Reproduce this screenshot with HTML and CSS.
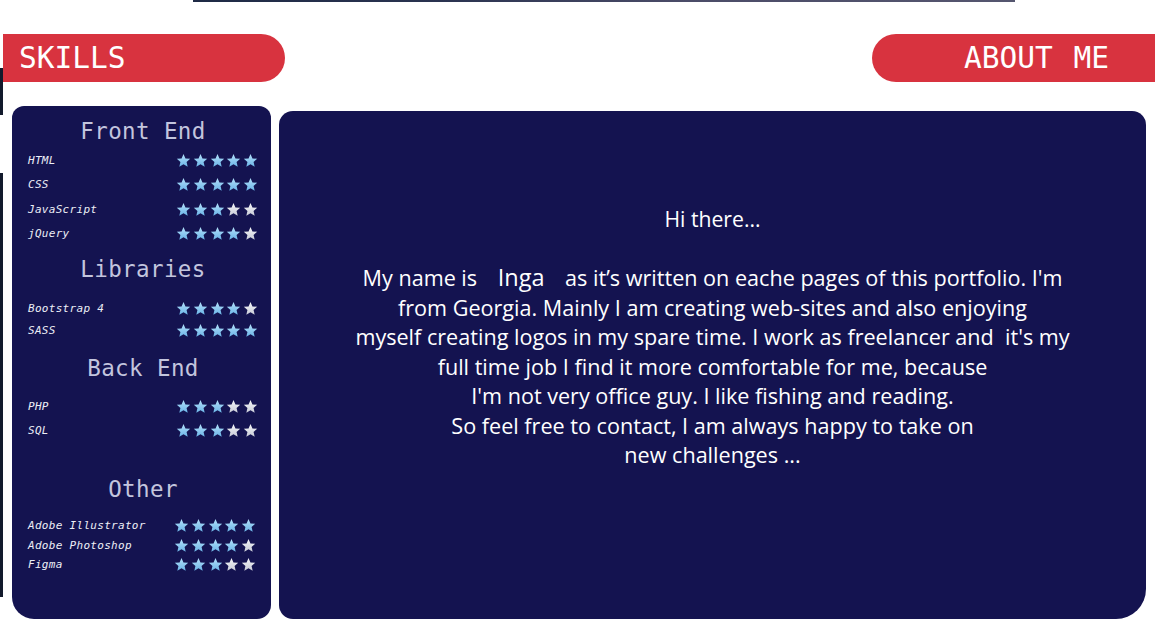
FILE: index.html
```html
<!DOCTYPE html>
<html lang="en">
<head>
<meta charset="utf-8">
<title>Skills / About me</title>
<link rel="stylesheet" href="styles.css">
</head>
<body>
<svg class="defs" width="0" height="0" aria-hidden="true">
  <defs>
    <linearGradient id="gOn" x1="0" y1="0" x2="0" y2="1">
      <stop offset="0" stop-color="#b3e0fa"/>
      <stop offset="1" stop-color="#6cb5e8"/>
    </linearGradient>
    <linearGradient id="gOff" x1="0" y1="0" x2="0" y2="1">
      <stop offset="0" stop-color="#f4f5f8"/>
      <stop offset="1" stop-color="#c9ccd8"/>
    </linearGradient>
    <symbol id="star" viewBox="0 0 24 24">
      <path d="M12 1.6l3.1 7 7.6.7-5.8 5 1.8 7.5L12 17.8l-6.7 4 1.8-7.5-5.8-5 7.6-.7z"/>
    </symbol>
  </defs>
</svg>
<div class="page">
  <div class="edge-top"></div>
  <div class="stage">
    <div class="edge-left"><span class="seg seg1"></span><span class="seg seg2"></span></div>
    <div class="content">
      <header class="header">
        <div class="pill pill-left">SKILLS</div>
        <div class="pill pill-right">ABOUT ME</div>
      </header>
      <div class="main">
        <aside class="skills">
          <section class="group g-front">
            <h3 class="title">Front End</h3>
            <div class="row"><span class="label">HTML</span><span class="stars"><svg class="star on"><use href="#star"/></svg><svg class="star on"><use href="#star"/></svg><svg class="star on"><use href="#star"/></svg><svg class="star on"><use href="#star"/></svg><svg class="star on"><use href="#star"/></svg></span></div>
            <div class="row"><span class="label">CSS</span><span class="stars"><svg class="star on"><use href="#star"/></svg><svg class="star on"><use href="#star"/></svg><svg class="star on"><use href="#star"/></svg><svg class="star on"><use href="#star"/></svg><svg class="star on"><use href="#star"/></svg></span></div>
            <div class="row"><span class="label">JavaScript</span><span class="stars"><svg class="star on"><use href="#star"/></svg><svg class="star on"><use href="#star"/></svg><svg class="star on"><use href="#star"/></svg><svg class="star off"><use href="#star"/></svg><svg class="star off"><use href="#star"/></svg></span></div>
            <div class="row"><span class="label">jQuery</span><span class="stars"><svg class="star on"><use href="#star"/></svg><svg class="star on"><use href="#star"/></svg><svg class="star on"><use href="#star"/></svg><svg class="star on"><use href="#star"/></svg><svg class="star off"><use href="#star"/></svg></span></div>
          </section>
          <section class="group g-lib">
            <h3 class="title">Libraries</h3>
            <div class="row"><span class="label">Bootstrap 4</span><span class="stars"><svg class="star on"><use href="#star"/></svg><svg class="star on"><use href="#star"/></svg><svg class="star on"><use href="#star"/></svg><svg class="star on"><use href="#star"/></svg><svg class="star off"><use href="#star"/></svg></span></div>
            <div class="row"><span class="label">SASS</span><span class="stars"><svg class="star on"><use href="#star"/></svg><svg class="star on"><use href="#star"/></svg><svg class="star on"><use href="#star"/></svg><svg class="star on"><use href="#star"/></svg><svg class="star on"><use href="#star"/></svg></span></div>
          </section>
          <section class="group g-back">
            <h3 class="title">Back End</h3>
            <div class="row"><span class="label">PHP</span><span class="stars"><svg class="star on"><use href="#star"/></svg><svg class="star on"><use href="#star"/></svg><svg class="star on"><use href="#star"/></svg><svg class="star off"><use href="#star"/></svg><svg class="star off"><use href="#star"/></svg></span></div>
            <div class="row"><span class="label">SQL</span><span class="stars"><svg class="star on"><use href="#star"/></svg><svg class="star on"><use href="#star"/></svg><svg class="star on"><use href="#star"/></svg><svg class="star off"><use href="#star"/></svg><svg class="star off"><use href="#star"/></svg></span></div>
          </section>
          <section class="group g-other">
            <h3 class="title">Other</h3>
            <div class="row"><span class="label">Adobe Illustrator</span><span class="stars"><svg class="star on"><use href="#star"/></svg><svg class="star on"><use href="#star"/></svg><svg class="star on"><use href="#star"/></svg><svg class="star on"><use href="#star"/></svg><svg class="star on"><use href="#star"/></svg></span></div>
            <div class="row"><span class="label">Adobe Photoshop</span><span class="stars"><svg class="star on"><use href="#star"/></svg><svg class="star on"><use href="#star"/></svg><svg class="star on"><use href="#star"/></svg><svg class="star on"><use href="#star"/></svg><svg class="star off"><use href="#star"/></svg></span></div>
            <div class="row"><span class="label">Figma</span><span class="stars"><svg class="star on"><use href="#star"/></svg><svg class="star on"><use href="#star"/></svg><svg class="star on"><use href="#star"/></svg><svg class="star off"><use href="#star"/></svg><svg class="star off"><use href="#star"/></svg></span></div>
          </section>
        </aside>
        <section class="about">
          <h2 class="hello">Hi there...</h2>
          <p class="bio">My name is <span class="name">Inga</span> as it’s written on eache pages of this portfolio. I'm<br>
          from Georgia. Mainly I am creating web-sites and also enjoying<br>
          myself creating logos in my spare time. I work as freelancer and &nbsp;it's my<br>
          full time job I find it more comfortable for me, because<br>
          I'm not very office guy. I like fishing and reading.<br>
          So feel free to contact, I am always happy to take on<br>
          new challenges ...</p>
        </section>
      </div>
    </div>
  </div>
</div>
</body>
</html>
```
FILE: styles.css
```css
html, body {
  margin: 0;
  padding: 0;
  background: #ffffff;
}
body {
  width: 1157px;
  height: 629px;
  overflow: hidden;
}
.defs {
  display: block;
  width: 0;
  height: 0;
  overflow: hidden;
}
.page {
  width: 1157px;
  height: 629px;
}
.edge-top {
  height: 2px;
  margin-left: 193px;
  width: 822px;
  background: linear-gradient(90deg, #1e2a45 0%, #2a3350 30%, #4b4c68 60%, #55566f 100%);
}
.stage {
  display: flex;
}
.edge-left {
  width: 3px;
  display: flex;
  flex-direction: column;
}
.seg {
  display: block;
  background: #121a2c;
}
.seg1 {
  margin-top: 66px;
  height: 47px;
}
.seg2 {
  margin-top: 58px;
  height: 424px;
}
.content {
  flex: 1;
}
.header {
  display: flex;
  justify-content: space-between;
  margin-top: 32px;
}
.pill {
  height: 48px;
  background: #d8333f;
  color: #ffffff;
  font-family: "DejaVu Sans Mono", "Liberation Mono", monospace;
  font-size: 29.5px;
  line-height: 48px;
  box-sizing: border-box;
}
.pill-left {
  width: 282px;
  border-radius: 0 24px 24px 0;
  padding-left: 16px;
}
.pill-right {
  width: 283px;
  margin-right: 2px;
  border-radius: 24px 0 0 24px;
  text-align: right;
  padding-right: 46px;
  word-spacing: 3px;
}
.main {
  display: flex;
  align-items: flex-start;
  gap: 8px;
  padding-left: 9px;
}
.skills {
  width: 259px;
  height: 513px;
  margin-top: 24px;
  background: #141350;
  border-radius: 12px 12px 14px 22px;
  box-sizing: border-box;
  padding: 10px 13px 0 16px;
  color: #ecedf5;
}
.group {
  display: flex;
  flex-direction: column;
}
.title {
  margin: 0;
  font-family: "DejaVu Sans Mono", monospace;
  font-weight: normal;
  font-size: 22.5px;
  line-height: 30px;
  text-align: center;
  color: #c3c5de;
  letter-spacing: 0.4px;
}
.row {
  display: flex;
  justify-content: space-between;
  align-items: center;
}
.label {
  font-family: "DejaVu Sans Mono", monospace;
  font-style: italic;
  font-size: 11px;
  color: #eceef6;
  letter-spacing: 0.3px;
}
.stars {
  display: flex;
  gap: 1.75px;
}
.star {
  width: 15px;
  height: 15px;
  display: block;
}
.star.on {
  fill: url(#gOn);
}
.star.off {
  fill: url(#gOff);
}
.g-front .title {
  margin-bottom: 2px;
}
.g-front .row {
  height: 24.5px;
}
.g-lib {
  margin-top: 8px;
}
.g-lib .title {
  margin-bottom: 13px;
}
.g-lib .row {
  height: 22px;
}
.g-back {
  margin-top: 12px;
}
.g-back .title {
  margin-bottom: 11px;
}
.g-back .row {
  height: 24px;
}
.g-other {
  margin-top: 32px;
}
.g-other .title {
  margin-bottom: 12px;
}
.g-other .row {
  height: 19.5px;
  padding-right: 2px;
}
.about {
  width: 867px;
  height: 508px;
  margin-top: 29px;
  background: #141350;
  border-radius: 14px 14px 30px 14px;
  box-sizing: border-box;
  padding-top: 93px;
  text-align: center;
  color: #ffffff;
  font-family: "Open Sans", "Lato", sans-serif;
}
.hello {
  margin: 0 0 29.5px;
  font-weight: normal;
  font-size: 21.2px;
  line-height: 29.5px;
}
.bio {
  margin: 0;
  font-size: 21.6px;
  line-height: 29.5px;
}
.name {
  font-size: 23.5px;
  margin: 0 15px;
}
```
